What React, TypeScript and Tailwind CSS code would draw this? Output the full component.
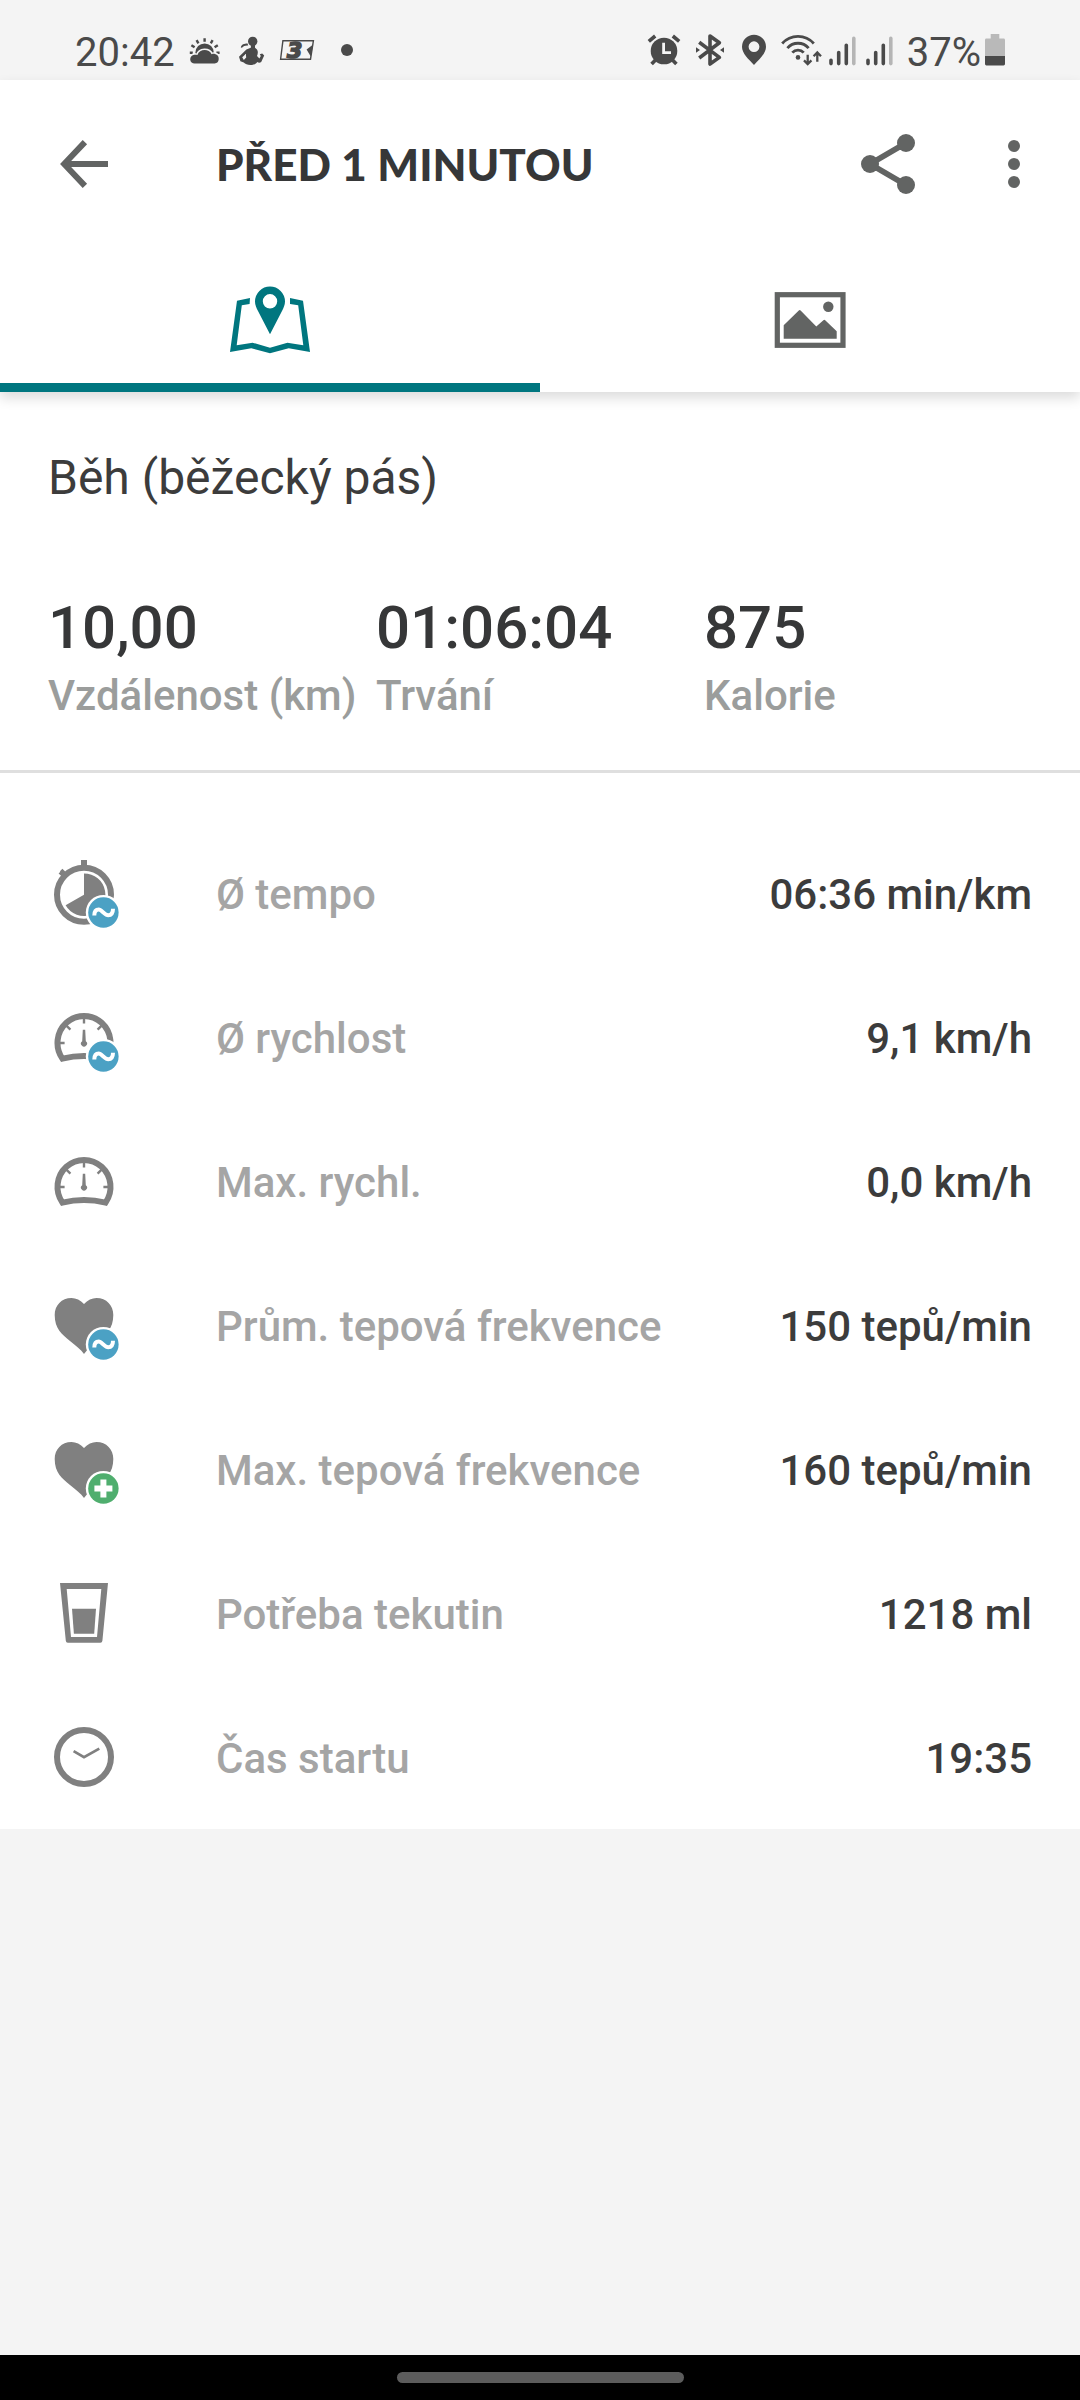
import { useState } from "react"

type Metric = {
  label: string
  value: string
  icon: React.ReactNode
}

const AvgBadge = () => (
  <g>
    <circle cx="55.4" cy="55.5" r="17.6" fill="#fff" />
    <circle cx="55.4" cy="55.5" r="15.2" fill="#4ba1c4" />
    <path
      d="M46.3 58.6C46.3 54.5 48 52.6 50.8 52.6C53.4 52.6 57 58.2 60.2 58.2C63.2 58.2 65 56 65 51.8"
      fill="none" stroke="#fff" strokeWidth="4"
    />
  </g>
)

const MaxBadge = () => (
  <g>
    <circle cx="55.4" cy="55.5" r="17.6" fill="#fff" />
    <circle cx="55.4" cy="55.5" r="15.2" fill="#4fae6e" />
    <path d="M46.4 55.5H64.4M55.4 46.5V64.5" fill="none" stroke="#fff" strokeWidth="6" />
  </g>
)

const MetricIcon = ({ children }: { children: React.ReactNode }) => (
  <svg viewBox="0 0 72 72" className="h-18 w-18" fill="#808080" aria-hidden="true">
    {children}
  </svg>
)

const Stopwatch = () => (
  <g>
    <circle cx="36" cy="37.7" r="27" fill="none" stroke="#808080" strokeWidth="6" />
    <path d="M33 3H39V10H33Z" />
    <path d="M10.6 16.4L12.3 14.7L11.9 14.3L14.4 11.8L19 16.2L15 20.4Z" />
    <path d="M36 37.7V16.4A21.3 21.3 0 1 1 17.6 48.3Z" />
  </g>
)

const Gauge = () => (
  <g fill="none" stroke="#808080">
    <path d="M14.4 56.6A26.5 27 0 1 1 57.6 56.6Q36 51.6 14.4 56.6Z" strokeWidth="6" transform="translate(0 1)" />
    <path
      d="M36 17V22.6M11 42H16.6M61 42H55.4M18.4 24.6L22.4 28.6M53.6 24.6L49.6 28.6"
      strokeWidth="2.4"
    />
    <path d="M34.8 28.7H37.2L37.8 40.2A3 3 0 1 1 34.2 40.2Z" fill="#808080" stroke="none" />
  </g>
)

const Heart = () => (
  <path d="M36 15C32.5 11 28 9 23.5 9C13.5 9 6.7 16.5 6.7 26C6.7 40 14 45 22 52C28 57 33 60.5 36 65C39 60.5 44 57 50 52C58 45 65.3 40 65.3 26C65.3 16.5 58.5 9 48.5 9C44 9 39.5 11 36 15Z" />
)

const Glass = () => (
  <g>
    <path
      fillRule="evenodd"
      d="M12 6H60L54.4 63.7Q54.2 65.8 52.4 65.8H19.8Q18 65.8 17.8 63.7ZM18.7 12L23 60H49L53.3 12Z"
    />
    <path d="M24 31.7H48L46.2 56.8H25.9Z" />
  </g>
)

const Clock = () => (
  <g fill="none" stroke="#808080">
    <circle cx="36" cy="36" r="27" strokeWidth="6" />
    <path d="M25.6 30.2L36 36.2L51.3 27.6" strokeWidth="2.7" />
  </g>
)

const METRICS: Metric[] = [
  { label: "Ø tempo", value: "06:36 min/km", icon: <><Stopwatch /><AvgBadge /></> },
  { label: "Ø rychlost", value: "9,1 km/h", icon: <><Gauge /><AvgBadge /></> },
  { label: "Max. rychl.", value: "0,0 km/h", icon: <Gauge /> },
  { label: "Prům. tepová frekvence", value: "150 tepů/min", icon: <><Heart /><AvgBadge /></> },
  { label: "Max. tepová frekvence", value: "160 tepů/min", icon: <><Heart /><MaxBadge /></> },
  { label: "Potřeba tekutin", value: "1218 ml", icon: <Glass /> },
  { label: "Čas startu", value: "19:35", icon: <Clock /> },
]

const SUMMARY = [
  { label: "Vzdálenost (km)", value: "10,00" },
  { label: "Trvání", value: "01:06:04" },
  { label: "Kalorie", value: "875" },
]

const SignalIcon = () => (
  <svg viewBox="0 0 27 36" className="h-9 w-[27px]" fill="none" strokeWidth="3.6" strokeLinecap="round">
    <path d="M2 26.2V29.6M9.7 18.6V29.6M17.3 11.2V29.6" stroke="#4a4a4a" />
    <path d="M24.8 4.4V29.6" stroke="#b5b5b5" />
  </svg>
)

const StatusBar = () => (
  <div className="flex h-20 items-center justify-between bg-[#f4f4f4] px-[75px] pt-6 text-[40px] leading-[48px] text-[#4a4a4a]">
    <div className="flex items-center">
      <span className="pt-0.5">20:42</span>
      {/* počasí */}
      <svg viewBox="0 0 32 36" className="ml-[14px] h-9 w-8" fill="#4a4a4a">
        <path
          d="M15.6 4.2V7.8M7.6 6.2L9.4 9.4M23.6 6.2L21.8 9.4M2.4 11.2L5.6 13.2M28.8 11.2L25.6 13.2M.8 18.8H3.8M27.4 18.8H30.6"
          stroke="#4a4a4a" strokeWidth="2.4"
        />
        <circle cx="15.6" cy="18.6" r="9.2" />
        <path
          d="M5.8 29.6A4.4 4.4 0 0 1 5.4 20.8C6.4 20.7 7.4 20.7 8.4 21.1C10.4 14.6 20 14.4 22.6 20.2C23.8 19.7 25 19.7 26 20A4.9 4.9 0 0 1 25.6 29.6Z"
          stroke="#f4f4f4" strokeWidth="3" paintOrder="stroke"
        />
      </svg>
      {/* fitness */}
      <svg viewBox="0 0 28 36" className="ml-4 h-9 w-7" fill="#4a4a4a">
        <circle cx="15.7" cy="7.4" r="4.7" />
        <path d="M3.8 13.4C4.6 10.4 7 9.6 10.6 9.6L11.2 11.6C8.4 11.4 6.6 12 5 13.8Z" />
        <path d="M14 11H18V13.8L20 15.4C21.4 17.6 20.8 20 20 22L22.4 24.6L23.8 22L22.8 20.2L25.2 19.6L27.2 21.6L24.2 28C22.8 29 21.4 28.8 20.4 28C19 30 16.6 30.9 13.4 30.9C10.4 30.9 8.2 29.8 6.8 28.4L3.4 27.2L2 22.8L9.4 15.6L13.8 13.8ZM8.8 20L5.2 23.2L6.8 26L9.2 23.4Z" fillRule="evenodd" />
      </svg>
      <svg viewBox="0 0 36 36" className="ml-[14px] h-9 w-9">
        <path d="M3.9 6.8H34.4L31.5 25.2H1.6Z" fill="none" stroke="#4a4a4a" strokeWidth="1.4" />
        <path d="M34.2 10.4L27.6 15.6L31.8 22.6Z" fill="#4a4a4a" />
        <text
          x="8" y="24" fill="#4a4a4a" stroke="#4a4a4a" strokeWidth="1.6"
          className="font-['DejaVu_Sans'] text-[22px] font-bold italic"
        >
          3
        </text>
      </svg>
      <svg viewBox="0 0 12 36" className="ml-[26px] h-9 w-3" fill="#4a4a4a">
        <circle cx="6" cy="16" r="6" />
      </svg>
    </div>

    <div className="flex items-center">
      {/* budík */}
      <svg viewBox="0 0 34 36" className="h-9 w-[34px]" fill="none" stroke="#4a4a4a">
        <circle cx="17" cy="17" r="13.3" fill="#4a4a4a" stroke="none" />
        <path d="M1.8 7.4L8.2 2M25.8 2L32.2 7.4M4.6 30L9 25.4M29.4 30L25 25.4" strokeWidth="3.6" />
        <path d="M16.6 8.8V18.6H24" stroke="#f4f4f4" strokeWidth="2.8" />
      </svg>
      <svg viewBox="0 0 28 36" className="ml-[15px] h-9 w-7" fill="none" stroke="#4a4a4a" strokeWidth="3.6">
        <path d="M3.2 8.2L23.4 23.4L14 30V2L23.4 8.8L3.2 24" strokeLinejoin="round" />
        <path d="M0 13.2L4 16L0 18.8ZM28 13.2L24 16L28 18.8Z" fill="#4a4a4a" stroke="none" />
      </svg>
      <svg viewBox="0 0 24 36" className="ml-[18px] h-9 w-6" fill="#4a4a4a">
        <path
          fillRule="evenodd"
          d="M12 .7A12 12 0 0 1 24 12.7C24 19.4 17.4 25 12 31C6.6 25 0 19.4 0 12.7A12 12 0 0 1 12 .7ZM12 7.3A5.4 5.4 0 1 0 12 18.1A5.4 5.4 0 1 0 12 7.3Z"
        />
      </svg>
      <svg viewBox="0 0 42 36" className="ml-[15px] h-9 w-[42px]" fill="none" stroke="#4a4a4a" strokeWidth="2.8">
        <path d="M1.2 9.5A21 21 0 0 1 32.8 9.5M6.4 14.1A14 14 0 0 1 27.6 14.1M11.3 18.6A7.6 7.6 0 0 1 22.7 18.6" />
        <circle cx="17" cy="23.4" r="2.3" fill="#4a4a4a" stroke="none" />
        <path d="M26.7 20.8V30M23 26.4L26.7 30.2L30.4 26.4M36.3 27.8V18.6M32.6 22.2L36.3 18.4L40 22.2" strokeWidth="2.3" />
      </svg>
      <span className="ml-[6px] flex gap-[10px]">
        <SignalIcon />
        <SignalIcon />
      </span>
      <span className="ml-[14px] pt-0.5">37%</span>
      <svg viewBox="0 0 20 36" className="ml-1 h-9 w-5">
        <path d="M5.7 0H14.3V4.6H18.6Q20 4.6 20 6V22H0V6Q0 4.6 1.4 4.6H5.7Z" fill="#b9b9b9" />
        <path d="M0 22H20V30Q20 31.4 18.6 31.4H1.4Q0 31.4 0 30Z" fill="#4a4a4a" />
      </svg>
    </div>
  </div>
)

const TabButton = ({
  active, onClick, title, children,
}: {
  active: boolean; onClick: () => void; title: string; children: React.ReactNode
}) => (
  <button
    role="tab"
    aria-selected={active}
    aria-label={title}
    onClick={onClick}
    className={`flex h-36 flex-1 items-center justify-center border-b-[9px] pt-[9px] ${
      active ? "border-[#00767f] text-[#00767f]" : "border-transparent text-[#626463]"
    }`}
  >
    {children}
  </button>
)

export default function App() {
  const [tab, setTab] = useState<"map" | "photos">("map")

  return (
    <div className="flex min-h-screen flex-col bg-[#f4f4f4] font-[Roboto,sans-serif]">
      <StatusBar />

      <div className="relative z-10 bg-white shadow-[0_6px_12px_rgba(0,0,0,0.14)]">
        <header className="flex h-42 items-center pr-[30px] pl-12 text-[#626463]">
          <button aria-label="Zpět">
            <svg viewBox="0 0 24 24" className="h-18 w-18" fill="none" stroke="currentColor" strokeWidth="2">
              <path d="M20 12H5.6M12.3 4.7L5.4 12L12.3 19.3" />
            </svg>
          </button>
          <h1 className="ml-24 flex-1 font-[Lato,sans-serif] text-[44px] leading-[56px] font-black text-[#363738]">
            PŘED 1 MINUTOU
          </h1>
          <button aria-label="Sdílet">
            <svg viewBox="0 0 24 24" className="h-18 w-18" fill="currentColor">
              <path d="M18 5L6 12L18 19" fill="none" stroke="currentColor" strokeWidth="1.9" />
              <circle cx="18" cy="5" r="3" />
              <circle cx="6" cy="12" r="3" />
              <circle cx="18" cy="19" r="3" />
            </svg>
          </button>
          <button aria-label="Další možnosti" className="ml-[54px]">
            <svg viewBox="0 0 24 24" className="h-18 w-18" fill="currentColor">
              <circle cx="12" cy="6" r="2" />
              <circle cx="12" cy="12" r="2" />
              <circle cx="12" cy="18" r="2" />
            </svg>
          </button>
        </header>

        <div role="tablist" className="flex">
          <TabButton active={tab === "map"} onClick={() => setTab("map")} title="Mapa">
            <svg viewBox="0 0 90 72" className="h-18 w-[90px]" fill="currentColor">
              <path d="M25 14L12 16.7L5 68L26.3 64.3L45 69.3L63.7 64.3L85 68L78 16.7L65 14V20L73.2 21.3L78.3 61.3L62.4 58.7L45 63.7L27.6 58.7L11.7 61.3L16.8 21.3L24.6 20Z" />
              <path
                fillRule="evenodd"
                d="M45 2.6A15 15 0 0 1 60 17.6C60 21 58.6 24 57 27L45 50.3L33 27C31.4 24 30 21 30 17.6A15 15 0 0 1 45 2.6ZM45 10.1A7.2 7.2 0 1 0 45 24.5A7.2 7.2 0 1 0 45 10.1Z"
              />
            </svg>
          </TabButton>
          <TabButton active={tab === "photos"} onClick={() => setTab("photos")} title="Fotky">
            <svg viewBox="0 0 90 72" className="h-18 w-[90px]" fill="currentColor">
              <rect x="12.3" y="10.7" width="65.7" height="50.6" fill="none" stroke="currentColor" strokeWidth="5.2" />
              <circle cx="63.3" cy="22.8" r="5.2" />
              <path d="M18.7 41.3L33.8 26.6Q34.7 25.6 35.6 26.6L51.3 42.5L58.4 36.2Q59.3 35.4 60.2 36.2L71.7 47.3V54.8H18.7Z" />
            </svg>
          </TabButton>
        </div>
      </div>

      <main className="bg-white">
        <section className="border-b-[3px] border-[#dfdfdf] px-12 pt-[58px] pb-[49px]">
          <h2 className="text-[48px] leading-[56px] text-[#3c3c3c]">Běh (běžecký pás)</h2>
          <dl className="mt-[87px] grid grid-cols-3">
            {SUMMARY.map((s) => (
              <div key={s.label} className="flex flex-col-reverse gap-2 font-medium whitespace-nowrap">
                <dt className="text-[42px] leading-[50px] text-[#9b9d9c]">{s.label}</dt>
                <dd className="text-[60px] leading-[70px] text-[#363738]">{s.value}</dd>
              </div>
            ))}
          </dl>
        </section>

        <dl className="pt-12 text-[42px] leading-[50px] font-medium">
          {METRICS.map((m) => (
            <div key={m.label} className="flex h-36 items-center px-12">
              <MetricIcon>{m.icon}</MetricIcon>
              <dt className="ml-24 flex-1 pt-1 text-[#a5a5a5]">{m.label}</dt>
              <dd className="pt-1 text-[#3c3c3c]">{m.value}</dd>
            </div>
          ))}
        </dl>
      </main>

      <div className="mt-auto flex h-[45px] items-center justify-center bg-black">
        <div className="h-[11px] w-[287px] rounded-full bg-[#5c5c5c]" />
      </div>
    </div>
  )
}
